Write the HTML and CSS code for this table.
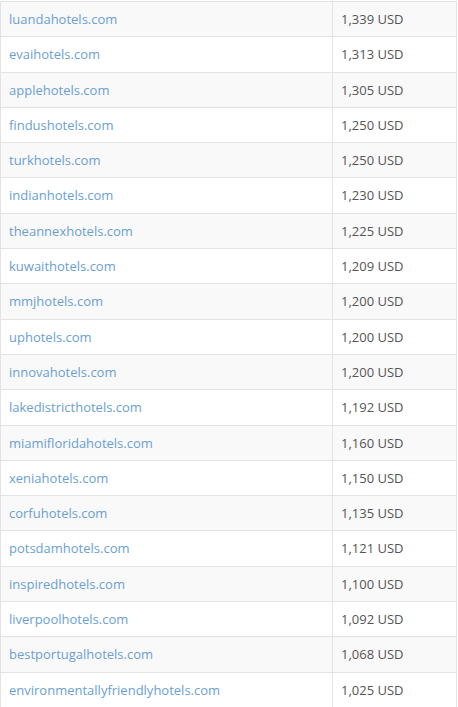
FILE: index.html
```html
<!DOCTYPE html>
<html>
<head>
<meta charset="utf-8">
<link rel="stylesheet" href="styles.css">
</head>
<body>
<table class="sales">
<tbody>
<tr><td class="dom"><a href="#">luandahotels.com</a></td><td class="price">1,339 USD</td></tr>
<tr><td class="dom"><a href="#">evaihotels.com</a></td><td class="price">1,313 USD</td></tr>
<tr><td class="dom"><a href="#">applehotels.com</a></td><td class="price">1,305 USD</td></tr>
<tr><td class="dom"><a href="#">findushotels.com</a></td><td class="price">1,250 USD</td></tr>
<tr><td class="dom"><a href="#">turkhotels.com</a></td><td class="price">1,250 USD</td></tr>
<tr><td class="dom"><a href="#">indianhotels.com</a></td><td class="price">1,230 USD</td></tr>
<tr><td class="dom"><a href="#">theannexhotels.com</a></td><td class="price">1,225 USD</td></tr>
<tr><td class="dom"><a href="#">kuwaithotels.com</a></td><td class="price">1,209 USD</td></tr>
<tr><td class="dom"><a href="#">mmjhotels.com</a></td><td class="price">1,200 USD</td></tr>
<tr><td class="dom"><a href="#">uphotels.com</a></td><td class="price">1,200 USD</td></tr>
<tr><td class="dom"><a href="#">innovahotels.com</a></td><td class="price">1,200 USD</td></tr>
<tr><td class="dom"><a href="#">lakedistricthotels.com</a></td><td class="price">1,192 USD</td></tr>
<tr><td class="dom"><a href="#">miamifloridahotels.com</a></td><td class="price">1,160 USD</td></tr>
<tr><td class="dom"><a href="#">xeniahotels.com</a></td><td class="price">1,150 USD</td></tr>
<tr><td class="dom"><a href="#">corfuhotels.com</a></td><td class="price">1,135 USD</td></tr>
<tr><td class="dom"><a href="#">potsdamhotels.com</a></td><td class="price">1,121 USD</td></tr>
<tr><td class="dom"><a href="#">inspiredhotels.com</a></td><td class="price">1,100 USD</td></tr>
<tr><td class="dom"><a href="#">liverpoolhotels.com</a></td><td class="price">1,092 USD</td></tr>
<tr><td class="dom"><a href="#">bestportugalhotels.com</a></td><td class="price">1,068 USD</td></tr>
<tr><td class="dom"><a href="#">environmentallyfriendlyhotels.com</a></td><td class="price">1,025 USD</td></tr>
</tbody>
</table>
</body>
</html>
```
FILE: styles.css
```css
html, body {
  margin: 0;
  padding: 0;
  background: #fff;
}
body {
  font-family: "Open Sans", "Liberation Sans", sans-serif;
  font-size: 13px;
  color: #555;
}
.sales {
  width: 457px;
  border-collapse: collapse;
  margin-top: 1px;
  border-left: 1px solid #e3e3e3;
  border-right: 1px solid #e3e3e3;
}
.sales tr:nth-child(odd) {
  background: #f9f9f9;
}
.sales td {
  border-top: 1px solid #e3e3e3;
  padding: 8px 8px;
  line-height: 18.3px;
  text-align: left;
  vertical-align: top;
}
.sales td.dom {
  width: 315px;
  border-right: 1px solid #e3e3e3;
}
.sales a {
  color: #6b9fd3;
  text-decoration: none;
}
.price {
  color: #555;
}
```
